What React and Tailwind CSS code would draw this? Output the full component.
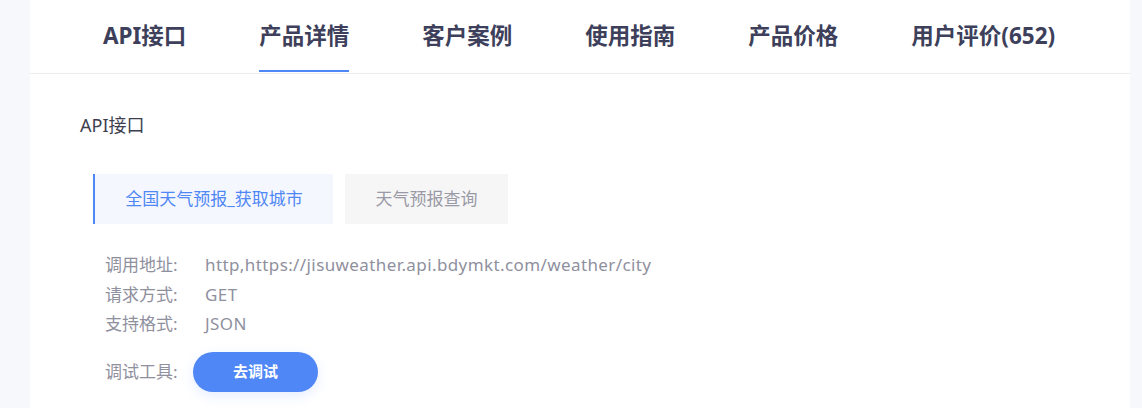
import React from "react";

const font = { fontFamily: '"Noto Sans", "Noto Sans CJK SC", sans-serif' };

export default function App() {
  const tabs = ["API接口", "产品详情", "客户案例", "使用指南", "产品价格", "用户评价(652)"];
  const rows = [
    ["调用地址:", "http,https://jisuweather.api.bdymkt.com/weather/city"],
    ["请求方式:", "GET"],
    ["支持格式:", "JSON"],
  ];
  return (
    <div className="w-[1142px] h-[408px] bg-[#f7f8fc] pl-[30px] pr-[12px] overflow-hidden" style={font}>
      <div className="bg-white h-full">
        <div className="flex h-[74px] border-b border-[#ececf0] pl-[73px] gap-[73px]">
          {tabs.map((t, i) => (
            <div key={t} className="relative flex items-center h-full pb-[1px]">
              <span className="text-[22.5px] font-bold text-[#3d3f5b] leading-none">{t}</span>
              {i === 1 && <div className="absolute left-0 right-0 bottom-[1px] h-[2px] bg-[#4f87f6]" />}
            </div>
          ))}
        </div>
        <div className="pl-[50px] pt-[38px]">
          <div className="text-[18px] text-[#3d3f4f] leading-[26px]">API接口</div>
          <div className="flex gap-[12px] mt-[36px] ml-[13px]">
            <div className="w-[240px] h-[50px] flex items-center justify-center bg-[#f5f7fe] border-l-2 border-[#4f87f6] text-[17px] text-[#4f87f6]">
              全国天气预报_获取城市
            </div>
            <div className="w-[163px] h-[50px] flex items-center justify-center bg-[#f6f6f7] text-[17px] text-[#9a9aa6]">
              天气预报查询
            </div>
          </div>
          <div className="ml-[25px] mt-[26px] flex flex-col">
            {rows.map(([k, v]) => (
              <div key={k} className="flex text-[17px] leading-[29.5px] text-[#8f909e]">
                <span className="w-[100px]">{k}</span>
                <span className="tracking-[0.4px]">{v}</span>
              </div>
            ))}
            <div className="flex items-center mt-[13px] text-[17px] text-[#8f909e]">
              <span className="w-[88px]">调试工具:</span>
              <button className="w-[125px] h-[40px] rounded-full bg-[#4f87f6] text-white text-[15px] font-bold shadow-[0_4px_12px_rgba(79,135,246,0.15)]">
                去调试
              </button>
            </div>
          </div>
        </div>
      </div>
    </div>
  );
}
